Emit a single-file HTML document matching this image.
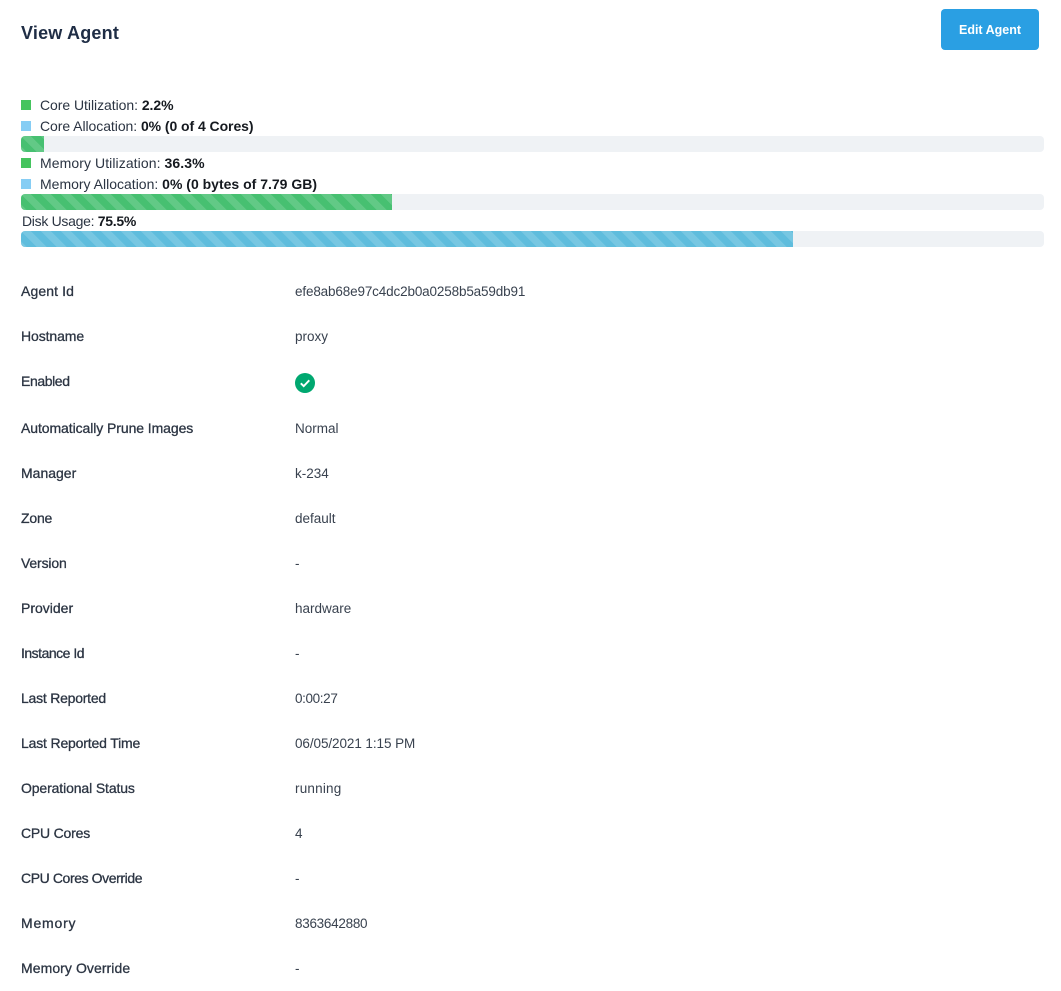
<!DOCTYPE html>
<html lang="en">
<head>
<meta charset="utf-8">
<title>View Agent</title>
<style>
html,body{margin:0;padding:0;background:#fff}
body{position:relative;width:1061px;height:991px;overflow:hidden;font-family:"Liberation Sans",sans-serif;font-size:13px;color:#2b3442}
.t{position:absolute;white-space:nowrap;line-height:18px}
h1{position:absolute;left:21px;top:21px;margin:0;font-size:18px;line-height:24px;font-weight:700;color:#1f2d45;white-space:nowrap;letter-spacing:.2px}
.btn{position:absolute;left:941px;top:9px;width:98px;height:41px;border-radius:4px;background:#2a9fe3;color:#fff;font-weight:700;font-size:12.5px;line-height:43px;text-align:center}
.sq{position:absolute;left:21px;width:10px;height:10px}
.g{background:#45c45e}.b{background:#86cdf4}
.u{color:#2b3442;font-size:14px}
.u b{color:#15191f}
.bar{position:absolute;left:21px;width:1023px;height:16px;background:#eff2f5;border-radius:4px;overflow:hidden}
.fill{height:16px;background-size:20px 20px;background-image:linear-gradient(45deg,rgba(255,255,255,.15) 25%,transparent 25%,transparent 50%,rgba(255,255,255,.15) 50%,rgba(255,255,255,.15) 75%,transparent 75%,transparent)}
.l{left:21px;font-weight:400;color:#2c3543;font-size:14px;-webkit-text-stroke:.3px #2c3543}
.v{left:295px;color:#39424f;font-size:13.5px;margin-top:1px}
</style>
</head>
<body>
<h1>View Agent</h1>
<div class="btn">Edit Agent</div>

<div class="sq g" style="top:100px"></div>
<div class="t u" style="left:40px;top:96px;letter-spacing:-.05px">Core Utilization: <b>2.2%</b></div>
<div class="sq b" style="top:121px"></div>
<div class="t u" style="left:40px;top:117px;letter-spacing:-.06px">Core Allocation: <b>0% (0 of 4 Cores)</b></div>
<div class="bar" style="top:136px"><div class="fill" style="width:23px;background-color:#47c071"></div></div>

<div class="sq g" style="top:158px"></div>
<div class="t u" style="left:40px;top:154px;letter-spacing:.08px">Memory Utilization: <b>36.3%</b></div>
<div class="sq b" style="top:179px"></div>
<div class="t u" style="left:40px;top:175px">Memory Allocation: <b>0% (0 bytes of 7.79 GB)</b></div>
<div class="bar" style="top:194px"><div class="fill" style="width:371px;background-color:#47c071"></div></div>

<div class="t u" style="left:22px;top:212px;letter-spacing:-.3px">Disk Usage: <b>75.5%</b></div>
<div class="bar" style="top:231px"><div class="fill" style="width:772px;background-color:#5fbddd"></div></div>

<div class="t l" style="top:282px;letter-spacing:.1px">Agent Id</div><div class="t v" style="top:282px;letter-spacing:-.15px">efe8ab68e97c4dc2b0a0258b5a59db91</div>
<div class="t l" style="top:327px;letter-spacing:-.1px">Hostname</div><div class="t v" style="top:327px">proxy</div>
<div class="t l" style="top:372px;letter-spacing:-.4px">Enabled</div>
<svg style="position:absolute;left:295px;top:373px" width="20" height="20" viewBox="0 0 20 20"><circle cx="10" cy="10" r="10" fill="#00a870"/><path d="M5.8 10.3l2.9 2.8 5.6-5.8" fill="none" stroke="#fff" stroke-width="1.9"/></svg>
<div class="t l" style="top:419px;letter-spacing:-.08px">Automatically Prune Images</div><div class="t v" style="top:419px">Normal</div>
<div class="t l" style="top:464px">Manager</div><div class="t v" style="top:464px">k-234</div>
<div class="t l" style="top:509px;letter-spacing:-.2px">Zone</div><div class="t v" style="top:509px">default</div>
<div class="t l" style="top:554px;letter-spacing:-.15px">Version</div><div class="t v" style="top:554px">-</div>
<div class="t l" style="top:599px">Provider</div><div class="t v" style="top:599px">hardware</div>
<div class="t l" style="top:644px;letter-spacing:-.5px">Instance Id</div><div class="t v" style="top:644px">-</div>
<div class="t l" style="top:689px;letter-spacing:-.23px">Last Reported</div><div class="t v" style="top:689px;letter-spacing:-.37px">0:00:27</div>
<div class="t l" style="top:734px;letter-spacing:-.17px">Last Reported Time</div><div class="t v" style="top:734px;letter-spacing:-.08px">06/05/2021 1:15 PM</div>
<div class="t l" style="top:779px;letter-spacing:-.12px">Operational Status</div><div class="t v" style="top:779px;letter-spacing:.2px">running</div>
<div class="t l" style="top:824px;letter-spacing:-.2px">CPU Cores</div><div class="t v" style="top:824px">4</div>
<div class="t l" style="top:869px;letter-spacing:-.4px">CPU Cores Override</div><div class="t v" style="top:869px">-</div>
<div class="t l" style="top:914px;letter-spacing:.8px">Memory</div><div class="t v" style="top:914px;letter-spacing:-.28px">8363642880</div>
<div class="t l" style="top:959px;letter-spacing:.07px">Memory Override</div><div class="t v" style="top:959px">-</div>
</body>
</html>
